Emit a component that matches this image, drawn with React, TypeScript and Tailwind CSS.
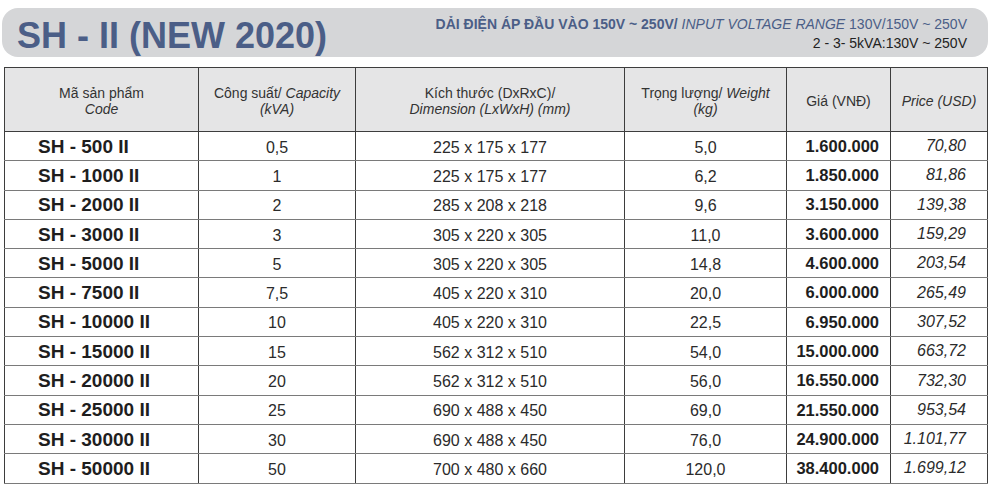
import React from "react";

const rows = [
  { code: "SH - 500 II", kva: "0,5", dim: "225 x 175 x 177", kg: "5,0", vnd: "1.600.000", usd: "70,80" },
  { code: "SH - 1000 II", kva: "1", dim: "225 x 175 x 177", kg: "6,2", vnd: "1.850.000", usd: "81,86" },
  { code: "SH - 2000 II", kva: "2", dim: "285 x 208 x 218", kg: "9,6", vnd: "3.150.000", usd: "139,38" },
  { code: "SH - 3000 II", kva: "3", dim: "305 x 220 x 305", kg: "11,0", vnd: "3.600.000", usd: "159,29" },
  { code: "SH - 5000 II", kva: "5", dim: "305 x 220 x 305", kg: "14,8", vnd: "4.600.000", usd: "203,54" },
  { code: "SH - 7500 II", kva: "7,5", dim: "405 x 220 x 310", kg: "20,0", vnd: "6.000.000", usd: "265,49" },
  { code: "SH - 10000 II", kva: "10", dim: "405 x 220 x 310", kg: "22,5", vnd: "6.950.000", usd: "307,52" },
  { code: "SH - 15000 II", kva: "15", dim: "562 x 312 x 510", kg: "54,0", vnd: "15.000.000", usd: "663,72" },
  { code: "SH - 20000 II", kva: "20", dim: "562 x 312 x 510", kg: "56,0", vnd: "16.550.000", usd: "732,30" },
  { code: "SH - 25000 II", kva: "25", dim: "690 x 488 x 450", kg: "69,0", vnd: "21.550.000", usd: "953,54" },
  { code: "SH - 30000 II", kva: "30", dim: "690 x 488 x 450", kg: "76,0", vnd: "24.900.000", usd: "1.101,77" },
  { code: "SH - 50000 II", kva: "50", dim: "700 x 480 x 660", kg: "120,0", vnd: "38.400.000", usd: "1.699,12" },
];

export default function App() {
  return (
    <div className="w-[994px] h-[486px] bg-white overflow-hidden text-[#2b2b2b] font-['Liberation_Sans',Arial,sans-serif]">
      {/* Title banner */}
      <div className="mt-[8px] ml-[2px] w-[986px] h-[49px] rounded-[16px] bg-[#d5d6d8] flex items-start justify-between">
        <h1 className="pl-[15px] pt-[7px] text-[36px] leading-[42px] font-bold text-[#4b5e87]">
          SH - II (NEW 2020)
        </h1>
        <div className="pr-[21px] pt-[8px] text-right text-[14px] leading-[16px]">
          <div className="text-[#4b5e87]">
            <span className="font-bold">DẢI ĐIỆN ÁP ĐẦU VÀO 150V ~ 250V/</span>
            <span className="italic"> INPUT VOLTAGE RANGE</span>
            <span> 130V/150V ~ 250V</span>
          </div>
          <div className="mt-[3px] text-[#222]">2 - 3- 5kVA:130V ~ 250V</div>
        </div>
      </div>

      {/* Price table */}
      <table className="mt-[10px] ml-[4px] w-[983px] table-fixed border-collapse border border-[#3d3d3d]">
        <colgroup>
          <col className="w-[194px]" />
          <col className="w-[157px]" />
          <col className="w-[269px]" />
          <col className="w-[162px]" />
          <col className="w-[104px]" />
          <col className="w-[97px]" />
        </colgroup>
        <thead>
          <tr className="h-[64px] bg-[#e5e5e6] text-[14px] leading-[16px] text-[#333]">
            <th className="font-normal border border-[#3d3d3d] pt-[2px]">
              Mã sản phẩm
              <br />
              <span className="italic">Code</span>
            </th>
            <th className="font-normal border border-[#3d3d3d] pt-[2px]">
              Công suất/ <span className="italic">Capacity</span>
              <br />
              <span className="italic">(kVA)</span>
            </th>
            <th className="font-normal border border-[#3d3d3d] pt-[2px]">
              Kích thước (DxRxC)/
              <br />
              <span className="italic">Dimension (LxWxH) (mm)</span>
            </th>
            <th className="font-normal border border-[#3d3d3d] pt-[2px]">
              Trọng lượng/ <span className="italic">Weight</span>
              <br />
              <span className="italic">(kg)</span>
            </th>
            <th className="font-normal border border-[#3d3d3d] pt-[2px]">Giá (VNĐ)</th>
            <th className="font-normal italic border border-[#3d3d3d] pt-[2px]">Price (USD)</th>
          </tr>
        </thead>
        <tbody>
          {rows.map((r) => (
            <tr key={r.code} className="h-[29.3px] text-[16px]">
              <td className="border-x border-x-[#3d3d3d] border-y border-y-[#7a7a7a] pl-[33px] text-[19px] font-bold leading-none text-[#1e1e1e]">
                {r.code}
              </td>
              <td className="border-x border-x-[#3d3d3d] border-y border-y-[#7a7a7a] text-center pt-[3px] leading-none">
                {r.kva}
              </td>
              <td className="border-x border-x-[#3d3d3d] border-y border-y-[#7a7a7a] text-center pt-[3px] leading-none">
                {r.dim}
              </td>
              <td className="border-x border-x-[#3d3d3d] border-y border-y-[#7a7a7a] text-center pt-[3px] leading-none">
                {r.kg}
              </td>
              <td className="border-x border-x-[#3d3d3d] border-y border-y-[#7a7a7a] text-right pr-[11px] text-[16.5px] font-bold leading-none text-[#1e1e1e]">
                {r.vnd}
              </td>
              <td className="border-x border-x-[#3d3d3d] border-y border-y-[#7a7a7a] text-right pr-[21px] italic leading-none">
                {r.usd}
              </td>
            </tr>
          ))}
        </tbody>
      </table>
    </div>
  );
}
